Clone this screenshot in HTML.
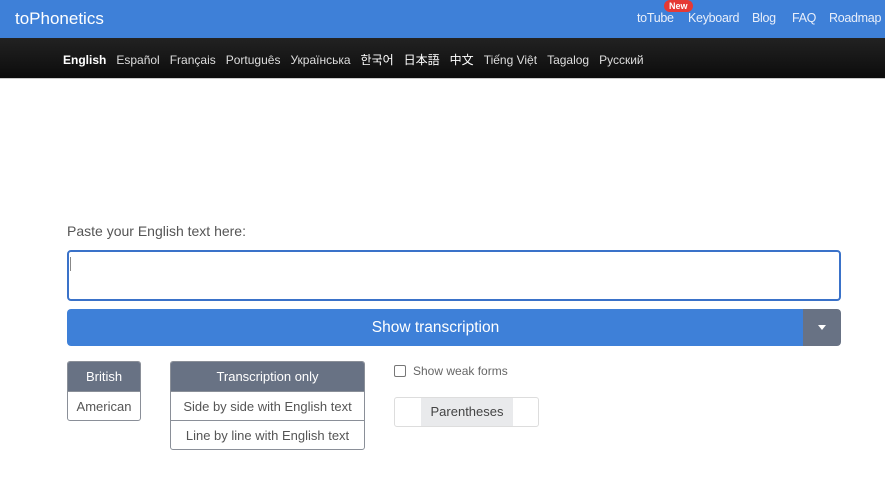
<!DOCTYPE html>
<html><head><meta charset="utf-8"><style>
*{box-sizing:border-box;margin:0;padding:0}
body{width:885px;height:480px;background:#fff;font-family:"Liberation Sans","Noto Sans CJK KR",sans-serif;position:relative;overflow:hidden}
.top{position:absolute;left:0;top:0;width:885px;height:38px;background:#3e80d8}
.logo{position:absolute;left:15px;top:9px;color:#fff;font-size:17px}
.tnav{position:absolute;top:11px;color:#e8eefa;font-size:12.5px;letter-spacing:-0.3px}
.badge{position:absolute;left:664px;top:0px;background:#e53935;color:#fff;font-size:9px;border-radius:8px;padding:1px 5px;font-weight:bold}
.dark{position:absolute;left:0;top:38px;width:885px;height:41px;background:linear-gradient(#222,#0c0c0c);border-bottom:1px solid #ccc}
.lang{position:absolute;top:51px;font-size:12px;color:#ddd;white-space:nowrap}
.lang span{margin-right:10px}
.lang b{color:#fff;margin-right:10px}
.lbl{position:absolute;left:67px;top:223px;font-size:14px;color:#555}
.ta{position:absolute;left:67px;top:250px;width:774px;height:51px;border:2px solid #3a72c9;border-radius:4px}
.caret{position:absolute;left:70px;top:257px;width:1px;height:14px;background:#888}
.btn{position:absolute;left:67px;top:309px;width:737px;height:37px;background:#3e80d8;border-radius:4px 0 0 4px;color:#fff;font-size:15.5px;text-align:center;line-height:37px}
.dd{position:absolute;left:803px;top:309px;width:38px;height:37px;background:#687284;border-radius:0 4px 4px 0}
.dd:after{content:"";position:absolute;left:15px;top:16px;border:4px solid transparent;border-top:5px solid #fff}
.grp{position:absolute;border:1px solid #8a8f98;border-radius:3px;overflow:hidden;font-size:13px;color:#555;text-align:center}
.grp div{height:29px;line-height:29px;border-top:1px solid #8a8f98}
.grp div:first-child{border-top:none;background:#687284;color:#fff}
.chk{position:absolute;left:394px;top:365px;width:12px;height:12px;border:1px solid #777;border-radius:2px}
.wk{position:absolute;left:413px;top:364px;font-size:12px;color:#666}
.par{position:absolute;left:394px;top:397px;width:145px;height:30px;border:1px solid #ddd;border-radius:3px;overflow:hidden}
.par div{position:absolute;left:26px;top:0;width:92px;height:28px;background:#e9eaec;text-align:center;line-height:28px;font-size:13px;color:#444}
</style></head><body>
<div class="top"></div>
<div class="logo">toPhonetics</div>
<div class="tnav" style="left:637px">toTube</div>
<div class="badge">New</div>
<div class="tnav" style="left:688px">Keyboard</div>
<div class="tnav" style="left:752px">Blog</div>
<div class="tnav" style="left:792px">FAQ</div>
<div class="tnav" style="left:829px">Roadmap</div>
<div class="dark"></div>
<div class="lang" style="left:63px"><b>English</b><span>Español</span><span>Français</span><span>Português</span><span>Українська</span><span style="color:#fff">한국어</span><span style="color:#fff">日本語</span><span style="color:#fff">中文</span><span>Tiếng Việt</span><span>Tagalog</span><span>Русский</span></div>
<div class="lbl">Paste your English text here:</div>
<div class="ta"></div><div class="caret"></div>
<div class="btn">Show transcription</div><div class="dd"></div>
<div class="grp" style="left:67px;top:361px;width:74px"><div>British</div><div>American</div></div>
<div class="grp" style="left:170px;top:361px;width:195px"><div>Transcription only</div><div>Side by side with English text</div><div>Line by line with English text</div></div>
<div class="chk"></div><div class="wk">Show weak forms</div>
<div class="par"><div>Parentheses</div></div>
</body></html>
